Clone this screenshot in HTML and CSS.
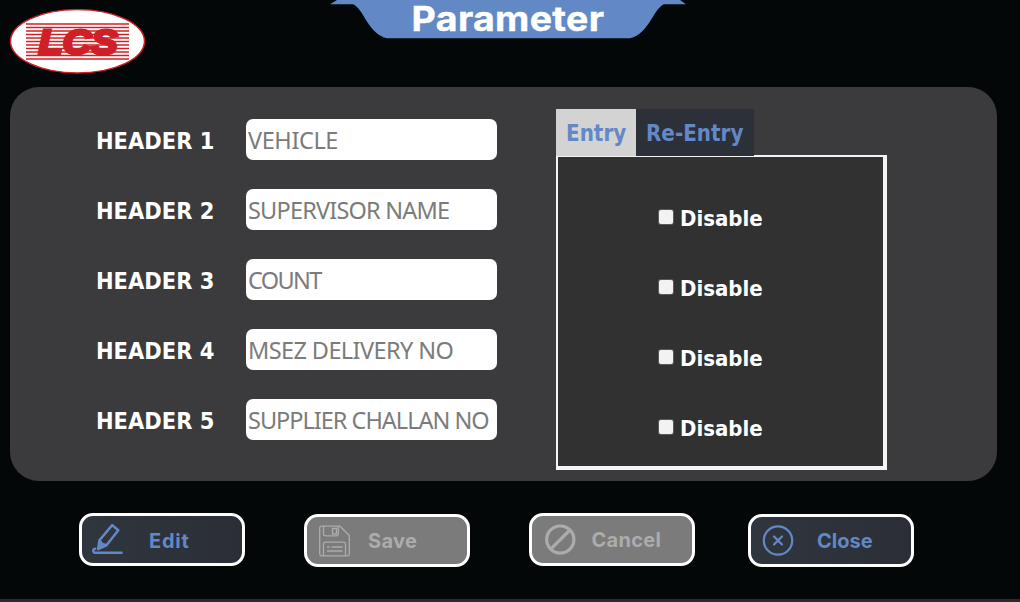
FILE: index.html
```html
<!DOCTYPE html>
<html lang="en">
<head>
<meta charset="utf-8">
<title>Parameter</title>
<link rel="stylesheet" href="styles.css">
</head>
<body>
<div class="screen">
  <header class="top">
    <svg class="logo" width="137" height="66" viewBox="9 8 137 66">
      <ellipse cx="77.500" cy="41.300" rx="67" ry="31.700" fill="#fff" stroke="#cf2027" stroke-width="1.400"/>
      <path d="M26 24h103M26 27.500h103M26 31h103M26 34.500h103M26 38h103M26 41.500h103M26 45h103M26 48.500h103M26 52h103M26 55.500h103M26 59h103" stroke="#cf2027" stroke-width="1.600"/>
      <text class="logo-text" x="38.500" y="54.300" textLength="79" lengthAdjust="spacingAndGlyphs">LCS</text>
    </svg>
    <div class="banner">
      <svg class="banner-shape" width="356" height="39" viewBox="330 0 356 39"><path d="M337 0H680L686 4.300H664C653 9 649 34 630 38.300H387C368 34 364 9 353 4.300H330Z" fill="#6288c6"/></svg>
      <h1 class="title">Parameter</h1>
    </div>
  </header>
  <main class="panel">
    <form class="fields">
      <label class="field"><span class="name">HEADER 1</span><input class="box b1" value="VEHICLE"></label>
      <label class="field"><span class="name">HEADER 2</span><input class="box b2" value="SUPERVISOR NAME"></label>
      <label class="field"><span class="name">HEADER 3</span><input class="box b3" value="COUNT"></label>
      <label class="field"><span class="name">HEADER 4</span><input class="box b4" value="MSEZ DELIVERY NO"></label>
      <label class="field"><span class="name">HEADER 5</span><input class="box b5" value="SUPPLIER CHALLAN NO"></label>
    </form>
    <section class="tabs">
      <nav class="tab-row"><span class="tab active">Entry</span><span class="tab second">Re-Entry</span></nav>
      <div class="tab-body">
        <div class="option"><i class="check"></i><span>Disable</span></div>
        <div class="option"><i class="check"></i><span>Disable</span></div>
        <div class="option"><i class="check"></i><span>Disable</span></div>
        <div class="option"><i class="check"></i><span>Disable</span></div>
      </div>
    </section>
  </main>
  <footer class="actions">
    <button class="btn edit">
      <svg class="icon" width="36" height="36" viewBox="90 521.500 36 36" fill="none" stroke="#6288c6" stroke-width="2.500" stroke-linejoin="round" stroke-linecap="round"><path d="M112.200 524.600L118.300 529.800L106.500 544.800L98 548.600L99.500 539.800ZM99.500 539.800L102 543.500L106.500 544.800M98 548.600L102 543.500"/><path d="M121.500 552.300H96C92.500 552.300 92.500 548.300 95 548.300"/></svg>
      <span class="cap">Edit</span>
    </button>
    <button class="btn save off">
      <svg class="icon" width="36" height="36" viewBox="315 522.500 36 36" fill="none" stroke="#acacac" stroke-width="1.300"><path d="M321.500 525.700H340L349.300 535V553.500Q349.300 555.300 347.500 555.300H321.500Q319.700 555.300 319.700 553.500V527.500Q319.700 525.700 321.500 525.700ZM323.500 526V533.500Q323.500 535.300 325.300 535.300H336.500Q338.300 535.300 338.300 533.500V526M332.500 528H336.500V533.500H332.500ZM323.500 555V543.500Q323.500 541.700 325.300 541.700H343.700Q345.500 541.700 345.500 543.500V555M327 546.500H329.500M331.500 546.500H342.500M327 550.500H342.500"/></svg>
      <span class="cap">Save</span>
    </button>
    <button class="btn cancel off">
      <svg class="icon" width="36" height="36" viewBox="539 522 36 36" fill="none" stroke="#acacac" stroke-width="3.200"><circle cx="559.300" cy="539.600" r="13.600"/><path d="M549.700 549.200L568.900 530"/></svg>
      <span class="cap">Cancel</span>
    </button>
    <button class="btn close">
      <svg class="icon" width="36" height="36" viewBox="759 522 36 36" fill="none" stroke="#6288c6" stroke-width="2.200" stroke-linecap="round"><circle cx="778" cy="540.500" r="14.200"/><path d="M774 536.500L782 544.500M782 536.500L774 544.500"/></svg>
      <span class="cap">Close</span>
    </button>
  </footer>
</div>
</body>
</html>
```

FILE: styles.css
```css
* { box-sizing: border-box; }
body { margin: 0; background: #030708; }
.screen {
  width: 1020px; height: 602px; overflow: hidden;
  display: flex; flex-direction: column;
  background: #030708; border-bottom: 3px solid #2b2a2c;
  font-family: "DejaVu Sans Condensed", "DejaVu Sans", sans-serif;
}
.top { height: 87px; flex: none; display: flex; align-items: flex-start; padding-left: 9px; }
.logo { display: block; margin-top: 8px; }
.logo-text { font: italic bold 35px "Liberation Sans", sans-serif; fill: #cf2027; stroke: #cf2027; stroke-width: 3px; }
.banner { display: grid; margin-left: 184px; width: 356px; height: 39px; }
.banner-shape, .title { grid-area: 1 / 1; display: block; }
.title {
  margin: 0; height: 39px; color: #fff; text-align: center;
  font: 700 33.500px/39px Inter, sans-serif; letter-spacing: 0.300px; white-space: nowrap;
  transform: scaleX(1.120); -webkit-text-stroke: 0.400px #fff;
}
.panel {
  flex: none; display: flex; align-items: flex-start;
  width: 987px; height: 394px; margin-left: 10px; padding-left: 86px;
  border-radius: 29px; background: #3b3b3d;
}
.fields { width: 401px; margin: 32px 59px 0 0; display: flex; flex-direction: column; gap: 29px; }
.field { display: flex; height: 41px; align-items: center; }
.name { width: 150px; color: #fff; font-size: 23.400px; font-weight: 700; line-height: 41px; padding-top: 3px; white-space: nowrap; }
.box {
  width: 251px; height: 41px; border: 0; border-radius: 7px; padding: 0 0 0 2px; margin: 0;
  background: #fff; color: #7b7b7b; font: 23.500px/39px "Noto Sans", sans-serif; outline: 0;
}
.b1 { letter-spacing: -0.4px; }
.b2 { letter-spacing: -0.8px; }
.b3 { letter-spacing: -1.6px; }
.b4 { letter-spacing: -0.6px; }
.b5 { letter-spacing: -1px; }
.tabs { width: 331px; margin-top: 22px; }
.tab-row { display: flex; height: 47px; position: relative; color: #6288c6; font-size: 22.200px; font-weight: 700; line-height: 49px; }
.tab { width: 80px; height: 47px; padding-left: 10px; white-space: nowrap; background: #2c3039; }
.tab.active { background: #d3d3d3; }
.tab.second { width: 118px; }
.tab-body {
  height: 315px; margin-top: -1px; padding: 46px 0 0 101px;
  display: flex; flex-direction: column; gap: 40px;
  background: #313131; border: solid #f4f4f4; border-width: 2px 4px 4px 2px;
}
.option { display: flex; align-items: center; height: 30px; color: #fff; font-size: 22px; font-weight: 700; line-height: 30px; }
.option span { padding-top: 2px; }
.check { width: 14px; height: 14px; margin: 0 7px 2px 0; border-radius: 2px; background: #f2f2f2; box-shadow: 0 0 0 1px #5a5a5a; }
.actions { display: flex; align-items: flex-start; padding: 32px 0 0 79px; }
.btn {
  display: flex; align-items: center; width: 166px; height: 53px; padding: 0 0 0 8px;
  border: 3px solid #fff; border-radius: 14px; background: linear-gradient(90deg, #30363e, #2b2e37);
  color: #6288c6; font: 700 20px/48px Inter, sans-serif; text-align: left;
}
.off { background: #7b7b7b; color: #acacac; }
.icon { flex: none; display: block; }
.save { margin: 1px 0 0 59px; }
.cancel { margin-left: 58.500px; }
.close { margin: 0.500px 0 0 53.500px; }
.cap { margin-left: 23px; white-space: nowrap; }
.edit .cap { letter-spacing: 0.8px; padding-top: 2px; }
.save .cap { margin-left: 17px; letter-spacing: 0.3px; }
.cancel .cap { margin-left: 16px; letter-spacing: 0.3px; }
.close .cap { margin-left: 22px; padding-top: 1px; }
```
